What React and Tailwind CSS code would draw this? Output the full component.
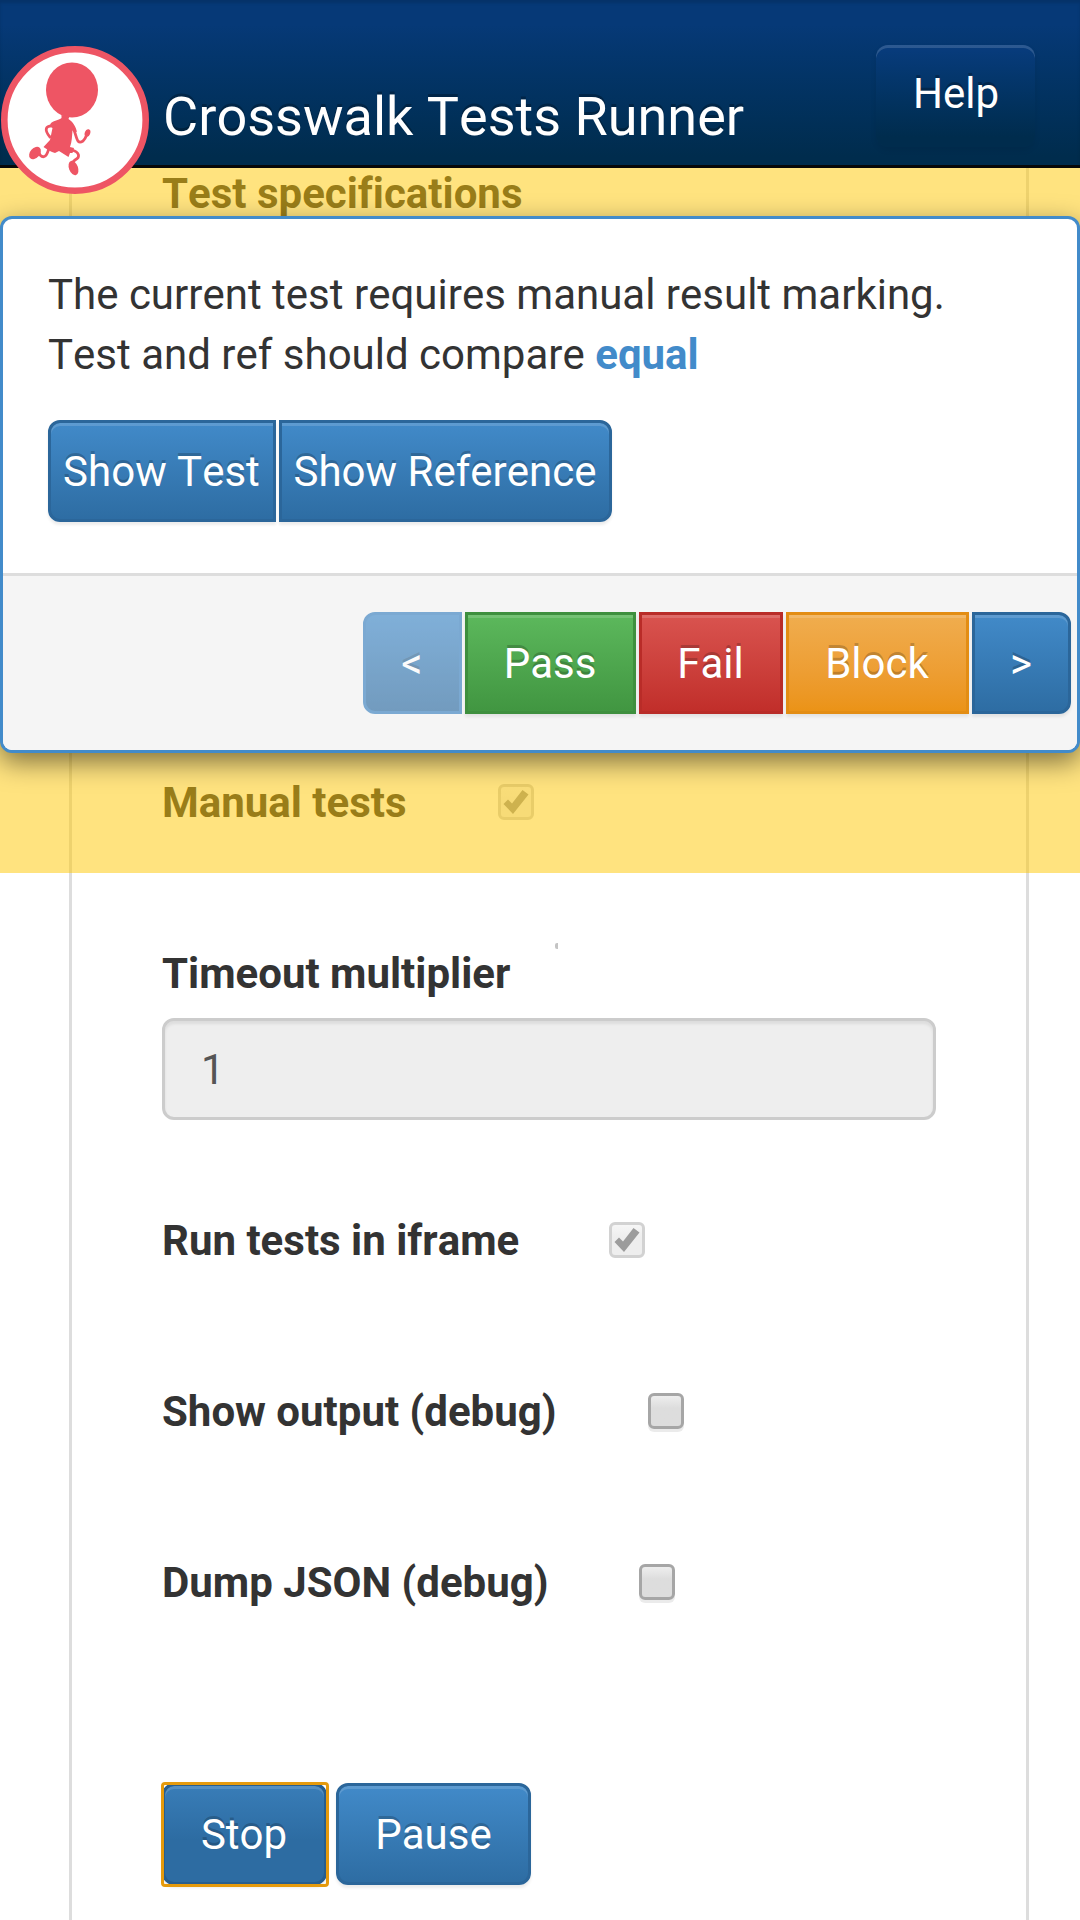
import React from "react";

const BUTTON =
  "flex h-[102px] items-center justify-center border-[3px] pt-[2px] pr-px leading-[60px] text-white [text-shadow:0_-3px_0_rgba(0,0,0,0.2)]";
const RAISED =
  "shadow-[inset_0_3px_0_rgba(255,255,255,0.15),0_3px_3px_rgba(0,0,0,0.075)]";
const PRIMARY = "border-[#2b669a] bg-linear-to-b from-[#428bca] to-[#2d6ca2] bg-origin-border";

function Button({ className = "", children, ...rest }) {
  return (
    <button type="button" className={`${BUTTON} ${className}`} {...rest}>
      {children}
    </button>
  );
}

function Check({ checked }) {
  return (
    <span
      role="checkbox"
      aria-checked={checked}
      className={
        checked
          ? "flex size-9 shrink-0 items-center justify-center rounded-[6px] border-[3px] border-[#d2d2d2] bg-linear-to-b from-[#f6f6f6] to-[#eeeeee] to-40%"
          : "block size-9 shrink-0 rounded-[6px] border-[3px] border-[#a6a6a6] bg-linear-to-b from-[#eeeeee] to-[#dddddd] to-40% shadow-[0_3px_0_rgba(0,0,0,0.08)]"
      }
    >
      {checked && (
        <svg viewBox="0 0 30 30" className="size-[30px] shrink-0" fill="#9c9c9c">
          <path d="M2.5 17 L7 12.5 L11 16.5 L21.5 3 L27.5 7.5 L12 27 Z" />
        </svg>
      )}
    </span>
  );
}

function CheckRow({ label, gap, checked = false }) {
  return (
    <label className={`mb-[111px] flex h-[60px] items-start font-bold ${gap}`}>
      <span>{label}</span>
      <span className="mt-[11px]">
        <Check checked={checked} />
      </span>
    </label>
  );
}

function Logo() {
  return (
    <svg viewBox="0 0 148 148" className="mt-[46px] ml-px size-[148px] shrink-0">
      <circle cx="74" cy="74" r="70.7" fill="#fff" stroke="#ee5564" strokeWidth="6.6" />
      <g fill="#ee5564">
        <ellipse cx="71" cy="44" rx="26" ry="27.5" />
        <path d="M60.500 69 L68.500 70 L67.500 73 C72 76 75 81 76 86 L71.500 84.500 C71 90 71 96 69 101 L73 102 L71.500 107 L69 107 L67.500 111 L58 105 L54 107 L51 106 L47 104 L42.500 101 L49 94 L51.500 82 L48.500 80 L50 77 C54 74 58 74 60.500 72 Z" />
        <ellipse cx="34" cy="107" rx="7" ry="4.800" transform="rotate(-48 34 107)" />
        <ellipse cx="72.500" cy="122" rx="4.500" ry="7.500" transform="rotate(-20 72.500 122)" />
        <ellipse cx="86.500" cy="87" rx="2.700" ry="3.900" transform="rotate(20 86.500 87)" />
      </g>
      <g fill="none" stroke="#ee5564" strokeWidth="2.8" strokeLinecap="round">
        <path d="M53 80 C44 79 43 84 49 91" />
        <path d="M73 84 C76 92 76 99 82 95 C85 92 85 90 86 88" />
        <path d="M48 102 C46 110 43 113 39 109 L37 104" />
        <path d="M71 104 C78 106 80 111 74 114 L71 117" />
      </g>
    </svg>
  );
}

function Header() {
  return (
    <header className="relative z-20 flex h-[168px] items-start border-b-[3px] border-[#080808] bg-linear-to-b from-[#063977] from-15% to-[#002c4d] to-95% shadow-[inset_0_3px_3px_rgba(0,0,0,0.12)]">
      <Logo />
      <h1 className="mt-[78px] ml-[14px] text-[54px] leading-[78px] whitespace-nowrap text-white [text-shadow:0_-3px_0_rgba(0,0,0,0.25)]">
        Crosswalk Tests Runner
      </h1>
      <button
        type="button"
        className="mt-[45px] mr-[45px] ml-auto h-[102px] w-[159px] rounded-[12px] bg-linear-to-b from-[#083c7e] to-[#002c4d] to-90% pb-[4px] pl-px leading-[60px] text-white shadow-[inset_0_3px_0_rgba(255,255,255,0.15),0_3px_6px_rgba(0,0,0,0.075)] [text-shadow:0_-3px_0_rgba(0,0,0,0.25)]"
      >
        Help
      </button>
    </header>
  );
}

function ResultDialog() {
  return (
    <section
      role="dialog"
      className="absolute inset-x-0 top-[216px] z-10 flex h-[537px] flex-col overflow-hidden rounded-[12px] border-[3px] border-[#428bca] bg-white shadow-[0_9px_27px_rgba(0,0,0,0.5)]"
    >
      <div className="grow px-[45px] pt-[46px]">
        <p>
          The current test requires manual result marking.
          <br />
          Test and ref should compare <b className="text-[#428bca]">equal</b>
        </p>
        <div className="mt-[35px] flex gap-[3px]">
          <Button className={`w-[228px] rounded-l-[12px] ${PRIMARY} ${RAISED}`}>Show Test</Button>
          <Button className={`w-[333px] rounded-r-[12px] ${PRIMARY} ${RAISED}`}>Show Reference</Button>
        </div>
      </div>
      <footer className="flex h-[177px] shrink-0 justify-end gap-[3px] border-t-[3px] border-[#dddddd] bg-[#f5f5f5] pt-[36px] pr-[6px]">
        <Button disabled className="w-[99px] rounded-l-[12px] border-[#3a82c0] bg-linear-to-b from-[#428bca] to-[#2d6ca2] opacity-65">&lt;</Button>
        <Button className={`w-[171px] border-[#3e8f3e] bg-linear-to-b from-[#5cb85c] to-[#419641] ${RAISED}`}>Pass</Button>
        <Button className={`w-[144px] border-[#b92c28] bg-linear-to-b from-[#d9534f] to-[#c12e2a] ${RAISED}`}>Fail</Button>
        <Button className={`w-[183px] border-[#e38d13] bg-linear-to-b from-[#f0ad4e] to-[#eb9316] ${RAISED}`}>Block</Button>
        <Button className={`w-[99px] rounded-r-[12px] ${PRIMARY} ${RAISED}`}>&gt;</Button>
      </footer>
    </section>
  );
}

export default function App() {
  return (
    <div className="relative h-[1920px] w-[1080px] overflow-hidden bg-white font-['Roboto',sans-serif] text-[42px] leading-[60px] text-[#333333] [font-kerning:none] [font-variant-ligatures:none]">
      <Header />
      <div className="absolute inset-x-0 top-0 h-[873px] bg-[#ffc800]/50" />
      <ResultDialog />

      <main className="-mt-[4px] ml-[69px] h-[1756px] w-[960px] border-x-[3px] border-[#dddddd] px-[90px]">
        <h2 className="mb-[549px] h-[60px] font-bold">Test specifications</h2>
        <CheckRow label="Manual tests" gap="gap-[91px]" checked />
        <div className="mb-[91px] h-[176px]">
          <div className="flex items-start justify-between">
            <label className="font-bold">Timeout multiplier</label>
            <span className="-mt-px mr-[378px] h-[6px] w-[3px] rounded-l-[2px] bg-[#c4c4c4]" />
          </div>
          <input
            readOnly
            value="1"
            className="mt-[14px] block h-[102px] w-full rounded-[12px] border-[3px] border-[#cccccc] bg-[#eeeeee] px-9 text-[#555555] shadow-[inset_0_3px_3px_rgba(0,0,0,0.075)]"
          />
        </div>
        <CheckRow label="Run tests in iframe" gap="gap-[90px]" checked />
        <CheckRow label="Show output (debug)" gap="gap-[91px]" />
        <CheckRow label="Dump JSON (debug)" gap="gap-[90px]" />
        <div className="mt-[170px] flex gap-[9px]">
          <div className="relative after:absolute after:-inset-x-[1.5px] after:-inset-y-[1.5px] after:rounded-[4px] after:border-[3px] after:border-[#e59a0c]">
            <Button
              className={`w-[165px] rounded-[12px] border-[#285e8e] bg-linear-to-b from-[#428bca] from-[-45px] to-[#2d6ca2] to-[54px] ${RAISED}`}
            >
              Stop
            </Button>
          </div>
          <Button className={`w-[195px] rounded-[12px] pr-0! ${PRIMARY} ${RAISED}`}>Pause</Button>
        </div>
      </main>
    </div>
  );
}
